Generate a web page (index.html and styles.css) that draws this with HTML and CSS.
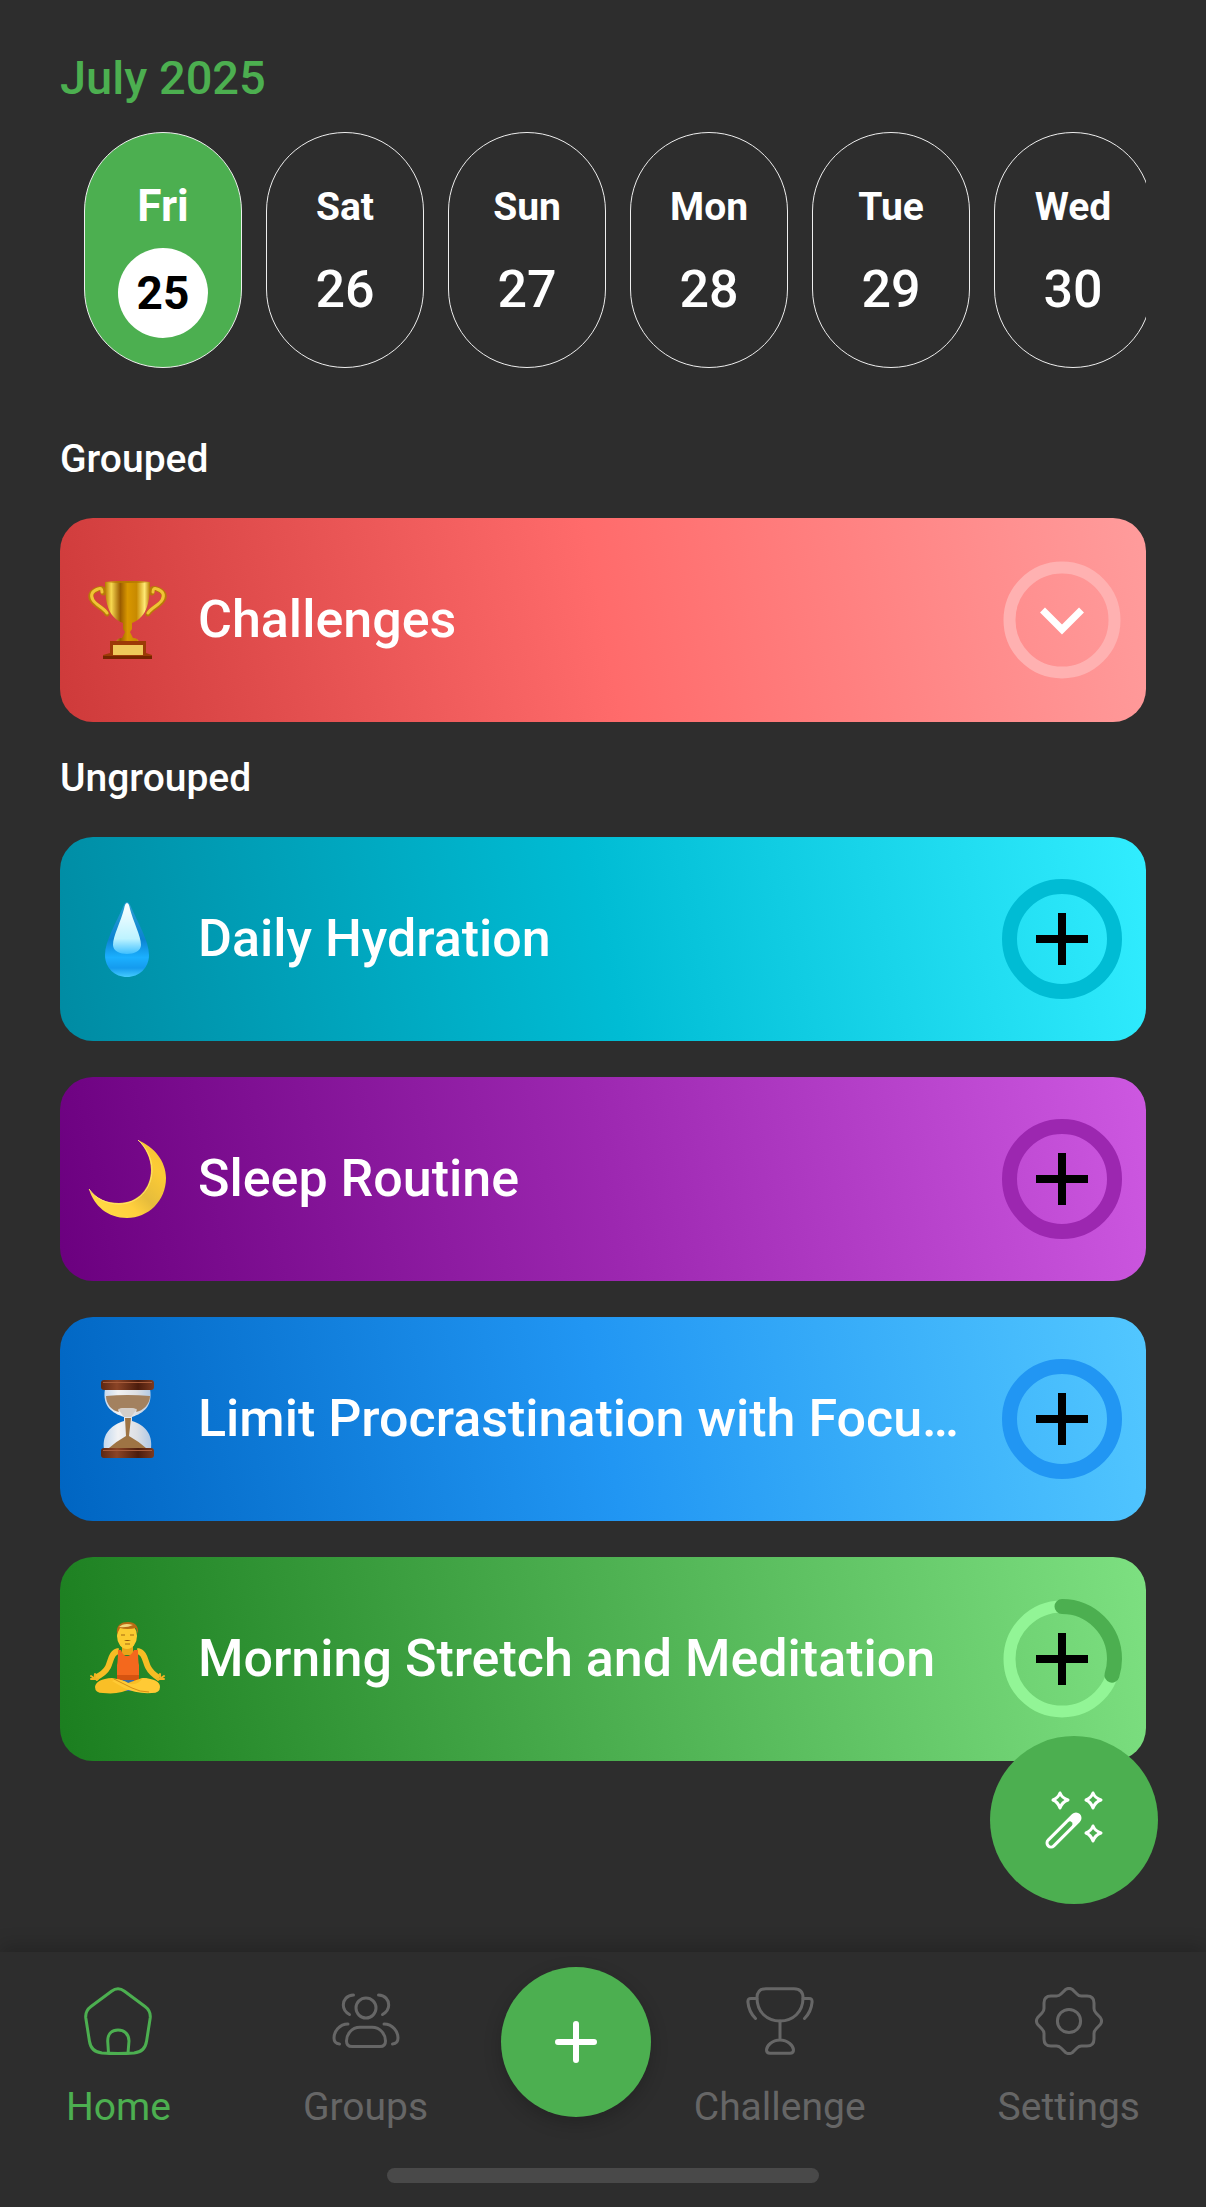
FILE: index.html
```
<!DOCTYPE html>
<html lang="en">
<head>
    <meta charset="UTF-8">
    <meta name="viewport" content="width=device-width, initial-scale=1.0">
    <title>Habits</title>
    <link rel="stylesheet" href="styles.css">
</head>
<body>
    <main class="content">
        <h1 class="month">July 2025</h1>
        <div class="days">
            <button class="day active"><span class="name">Fri</span><span class="date">25</span></button>
            <button class="day"><span class="name">Sat</span><span class="date">26</span></button>
            <button class="day"><span class="name">Sun</span><span class="date">27</span></button>
            <button class="day"><span class="name">Mon</span><span class="date">28</span></button>
            <button class="day"><span class="name">Tue</span><span class="date">29</span></button>
            <button class="day"><span class="name">Wed</span><span class="date">30</span></button>
        </div>

        <section class="group">
            <h2>Grouped</h2>
            <div class="card red">
                <svg class="emoji" viewBox="0 0 80 80" aria-hidden="true">
                    <defs>
                        <linearGradient id="gold" x1="0" x2="1" y1="0" y2="0">
                            <stop offset="0" stop-color="#b87a00"/>
                            <stop offset=".14" stop-color="#f7d850"/>
                            <stop offset=".34" stop-color="#9a5c00"/>
                            <stop offset=".5" stop-color="#d89700"/>
                            <stop offset=".7" stop-color="#c88a00"/>
                            <stop offset=".88" stop-color="#ffe975"/>
                            <stop offset="1" stop-color="#b87800"/>
                        </linearGradient>
                    </defs>
                    <g fill="none" stroke-linecap="round">
                        <path d="M15 13C17 8 13 8 10 9C4 11 1 15 4 20C7 26 16 28 19 34M64 13C62 8 66 8 69 9C75 11 78 15 75 20C72 26 63 28 60 34" stroke="#b87a08" stroke-width="5"/>
                        <path d="M14 12C14 8 12 8 10 9C4 11 2 15 5 20C8 25 16 28 19 33M65 12C65 8 67 8 69 9C75 11 77 15 74 20C71 25 63 28 60 33" stroke="#f0c435" stroke-width="3"/>
                    </g>
                    <path d="M17 2Q39 0 62 2C62 20 60 37 44 43V49L42 52L45 58Q50 58 51 62H28Q29 58 34 58L37 52L35 49V43C19 37 17 20 17 2Z" fill="url(#gold)"/>
                    <path d="M17 2Q39 4 62 2Q39 0 17 2Z" fill="#b87a00"/>
                    <path d="M22 61H58V73L64 75V79H15V75L22 73Z" fill="#9c3b06"/>
                    <path d="M15 76H64V79H15Z" fill="#752400"/>
                    <path d="M25 65H55V75H25Z" fill="#efc95a"/>
                </svg>
                <span class="title">Challenges</span>
                <button class="ring" aria-label="Expand challenges">
                    <svg viewBox="0 0 120 120">
                        <circle class="track" cx="60" cy="60" r="52.5"/>
                        <path class="chevron" d="M40.5 50L60 69.5L79.5 50"/>
                    </svg>
                </button>
            </div>
        </section>

        <section class="group">
            <h2>Ungrouped</h2>
            <div class="card cyan">
                <svg class="emoji" viewBox="0 0 80 80" aria-hidden="true">
                    <defs>
                        <linearGradient id="water" x1="0" x2="0" y1="0" y2="1">
                            <stop offset="0" stop-color="#2b9fd0"/>
                            <stop offset=".5" stop-color="#0b83d2"/>
                            <stop offset=".74" stop-color="#1bb0ff"/>
                            <stop offset=".88" stop-color="#159bee"/>
                            <stop offset="1" stop-color="#43cbff"/>
                        </linearGradient>
                        <linearGradient id="shine" x1="0" x2="0" y1="0" y2="1">
                            <stop offset="0" stop-color="#fff"/>
                            <stop offset=".7" stop-color="#bdf3ff"/>
                            <stop offset="1" stop-color="#3fc0ff"/>
                        </linearGradient>
                    </defs>
                    <path d="M39 3Q41 3 43 8C50 24 61 42 61 56C61 69 51 78 39 78S17 69 17 56C17 42 28 24 35 8Q37 3 39 3Z" fill="url(#water)"/>
                    <path d="M39 4Q41 4 42 10C45 22 53 37 53 46C53 58 25 58 25 46C25 37 33 22 36 10Q37 4 39 4Z" fill="url(#shine)"/>
                </svg>
                <span class="title">Daily Hydration</span>
                <button class="ring" aria-label="Add daily hydration">
                    <svg viewBox="0 0 120 120">
                        <circle class="full" cx="60" cy="60" r="52.5"/>
                        <path class="plus" d="M34 60H86M60 34V86"/>
                    </svg>
                </button>
            </div>
            <div class="card purple">
                <svg class="emoji" viewBox="0 0 80 80" aria-hidden="true">
                    <defs>
                        <linearGradient id="moon" x1="0" x2="1" y1="1" y2="0">
                            <stop offset="0" stop-color="#ffe04a"/>
                            <stop offset=".35" stop-color="#ffcf3d"/>
                            <stop offset=".5" stop-color="#e6bc3c"/>
                            <stop offset=".75" stop-color="#fccb35"/>
                            <stop offset="1" stop-color="#f3c037"/>
                        </linearGradient>
                    </defs>
                    <path d="M50 1C66 8 78 22 78 39C78 62 60 79 39 79C20 79 6 67 1 50C8 60 19 64 31 64C50 64 63 49 63 31C63 19 57 8 50 1Z" fill="url(#moon)"/>
                    <path d="M50 1C58 8 64 19 64 31C64 50 50 65 31 65C19 65 8 60 1 50" fill="none" stroke="#ffe36a" stroke-width="1"/>
                </svg>
                <span class="title">Sleep Routine</span>
                <button class="ring" aria-label="Add sleep routine">
                    <svg viewBox="0 0 120 120">
                        <circle class="full" cx="60" cy="60" r="52.5"/>
                        <path class="plus" d="M34 60H86M60 34V86"/>
                    </svg>
                </button>
            </div>
            <div class="card blue">
                <svg class="emoji" viewBox="0 0 80 80" aria-hidden="true">
                    <defs>
                        <linearGradient id="wood" x1="0" x2="1" y1="0" y2="0">
                            <stop offset="0" stop-color="#5d2712"/>
                            <stop offset=".3" stop-color="#8b4426"/>
                            <stop offset=".7" stop-color="#4c1c0c"/>
                            <stop offset="1" stop-color="#7c3a20"/>
                        </linearGradient>
                        <linearGradient id="glass" x1="0" x2="1" y1="0" y2="0">
                            <stop offset="0" stop-color="#c3d8ee"/>
                            <stop offset=".3" stop-color="#f1f2f4"/>
                            <stop offset=".7" stop-color="#dcdfe4"/>
                            <stop offset="1" stop-color="#b0c9e6"/>
                        </linearGradient>
                    </defs>
                    <path d="M17 10H62C65 27 56 34 44 38V42C57 46 65 55 63 70H16C14 55 23 46 36 42V38C24 34 14 27 17 10Z" fill="url(#glass)"/>
                    <path d="M18 17Q39 15 62 17C62 25 55 32 48 33Q51 29 39 29Q28 29 31 33C24 32 18 25 18 17Z" fill="#a3815f"/>
                    <path d="M37 39H43L41 57Q50 62 58 69H21Q29 62 38 57Z" fill="#9e7444"/>
                    <path d="M30 30Q39 28 49 30L43 38H36Z" fill="#d4cec9"/>
                    <rect x="13" y="1" width="53" height="10" rx="3" fill="url(#wood)"/>
                    <rect x="15" y="3" width="49" height="1" fill="#a75c3b"/>
                    <rect x="13" y="69" width="53" height="10" rx="3" fill="url(#wood)"/>
                    <rect x="15" y="71" width="49" height="1" fill="#a75c3b"/>
                </svg>
                <span class="title">Limit Procrastination with Focu…</span>
                <button class="ring" aria-label="Add limit procrastination">
                    <svg viewBox="0 0 120 120">
                        <circle class="full" cx="60" cy="60" r="52.5"/>
                        <path class="plus" d="M34 60H86M60 34V86"/>
                    </svg>
                </button>
            </div>
            <div class="card green">
                <svg class="emoji" viewBox="0 0 80 80" aria-hidden="true">
                    <path d="M31 32C23 33 23 42 20 48Q17 54 7 59M49 32C57 33 57 42 60 48Q63 54 71 59" fill="none" stroke="#f6bd24" stroke-width="6"/>
                    <path d="M9 61L3 57M7 58V55M10 60H3M70 61L76 57M72 58V55M69 60H76" stroke="#f2b321" stroke-width="2" stroke-linecap="round"/>
                    <path d="M34 26H45V36H34Z" fill="#e9a519"/>
                    <path d="M30 31H33Q35 37 39 37T46 31H50Q50 42 51 46V63H29V46Q30 42 30 31Z" fill="#f4681d"/>
                    <path d="M29 56H51V64H29Z" fill="#d65310"/>
                    <path d="M34 61H46V72H34Z" fill="#3d6fa3"/>
                    <path d="M24 59Q8 60 7 68Q7 74 15 74Q32 76 44 69L58 61Q62 59 54 59L40 64Q35 61 24 59Z" fill="#f9bf26"/>
                    <path d="M55 59Q72 60 72 68Q72 74 64 74Q48 75 36 69L24 62Q30 58 40 64Q48 68 55 59Z" fill="#ffca35"/>
                    <path d="M26 60L44 69Q52 73 61 73" fill="none" stroke="#d58f14" stroke-width="1"/>
                    <ellipse cx="39" cy="17" rx="10" ry="13" fill="#fccb30"/>
                    <path d="M29 15C28 6 33 3 40 3S51 7 50 15L48 9Q39 11 32 9Z" fill="#b96b13"/>
                    <path d="M31 8Q36 3 45 6Q39 9 31 8Z" fill="#f2d67a"/>
                    <path d="M33 16H37M42 16H46M37 25H42" fill="none" stroke="#a46b10" stroke-width="1"/>
                    <path d="M36 22Q39 20 43 22Z" fill="#8c4c0c"/>
                </svg>
                <span class="title">Morning Stretch and Meditation</span>
                <button class="ring" aria-label="Add morning stretch and meditation">
                    <svg viewBox="0 0 120 120">
                        <circle class="track" cx="60" cy="60" r="52.5"/>
                        <!-- 30% done -->
                        <circle class="progress" cx="60" cy="60" r="52.5" pathLength="100" transform="rotate(-90 60 60)"/>
                        <path class="plus" d="M34 60H86M60 34V86"/>
                    </svg>
                </button>
            </div>
        </section>

        <button class="magic" aria-label="Suggestions">
            <svg viewBox="0 0 60 60">
                <path d="M7 53L32 28" stroke="#fff" stroke-width="11" stroke-linecap="round"/>
                <path d="M7 53L26 34" stroke="#4CAF50" stroke-width="5" stroke-linecap="round"/>
                <g fill="none" stroke="#fff" stroke-width="3" stroke-linejoin="round">
                    <path d="M16 3Q18 8 24 10Q18 12 16 18Q14 12 9 10Q14 8 16 3Z"/>
                    <path d="M49 3Q51 8 57 10Q51 12 49 18Q47 12 42 10Q47 8 49 3Z"/>
                    <path d="M49 36Q51 41 57 43Q51 45 49 51Q47 45 42 43Q47 41 49 36Z"/>
                </g>
            </svg>
        </button>
    </main>

    <nav class="tabbar">
        <div class="tabs">
            <div class="side">
                <a href="#home" class="tab current">
                    <svg viewBox="0 0 68 68">
                        <path d="M27.5 4.2Q34 -.8 40.5 4.2L61 19.5Q67 24 66.2 31L62.6 54Q61 65 50 66Q34 67 18 66Q7 65 5.4 54L1.8 31Q1 24 7 19.5Z"/>
                        <path d="M24.5 66L23.7 54C23.7 47 28 43 34 43S45 47 45 54L44 66"/>
                    </svg>
                    Home
                </a>
                <a href="#groups" class="tab">
                    <svg viewBox="0 0 68 68">
                        <circle cx="34" cy="21" r="10"/>
                        <path d="M28 40.3H40C49 40.3 53.5 48 53.5 54Q53.5 59.6 48 59.6H20Q14.5 59.6 14.5 54C14.5 48 19 40.3 28 40.3Z"/>
                        <path d="M21.5 8C15 8 11.3 13 11.3 18Q11.3 24 17.5 27.5M46.5 8C53 8 56.7 13 56.7 18Q56.7 24 50.5 27.5"/>
                        <path d="M16 37C7 37 2 45 2 51Q2 56.5 7.5 57M52 37C61 37 66 45 66 51Q66 56.5 60.5 57"/>
                    </svg>
                    Groups
                </a>
            </div>
            <button class="add" aria-label="Add habit">
                <svg viewBox="0 0 42 42"><path d="M3 21H39M21 3V39"/></svg>
            </button>
            <div class="side">
                <a href="#challenge" class="tab">
                    <svg viewBox="0 0 68 68">
                        <path d="M20 1.7H48Q57 1.7 57 11C57 25 47 34 34 34S11 25 11 11Q11 1.7 20 1.7Z"/>
                        <path d="M11 11.4H5Q1.7 11.4 1.9 15C2.5 22 6 28 9.5 31.5M57 11.4H63Q66.3 11.4 66.1 15C65.5 22 62 28 58.5 31.5"/>
                        <path d="M34 34V53C42 53 47.5 59 47.5 63Q47.5 66.3 44 66.3H24Q20.5 66.3 20.5 63C20.5 59 26 53 34 53"/>
                    </svg>
                    Challenge
                </a>
                <a href="#settings" class="tab">
                    <svg viewBox="0 0 68 68">
                        <circle cx="34" cy="34" r="11.6"/>
                        <path d="M30.5 2.6Q34 .2 37.5 2.6L42 7Q43.8 9 46.5 9H52Q59 9 59 16V21.5Q59 24 61 26L65.3 30.5Q67.8 34 65.3 37.5L61 42Q59 44 59 46.5V52Q59 59 52 59H46.5Q44 59 42 61L37.5 65.4Q34 67.8 30.5 65.4L26 61Q24 59 21.5 59H16Q9 59 9 52V46.5Q9 44 7 42L2.7 37.5Q.2 34 2.7 30.5L7 26Q9 24 9 21.5V16Q9 9 16 9H21.5Q24 9 26 7Z"/>
                    </svg>
                    Settings
                </a>
            </div>
        </div>
        <div class="home-indicator"></div>
    </nav>
</body>
</html>
```
FILE: styles.css
```
* {
    box-sizing: border-box;
}
body {
    display: flex;
    flex-direction: column;
    min-height: 100vh;
    margin: 0;
    background-color: #2D2D2D;
    color: white;
    font-family: Roboto, sans-serif;
}
button {
    padding: 0;
    border: none;
    background: none;
    color: inherit;
    font-family: inherit;
    cursor: pointer;
}
svg {
    display: block;
}
.content {
    position: relative;
    flex: 1;
    padding: 50px 60px 0;
}
.month {
    margin: 0 0 26px;
    color: #4CAF50;
    font-size: 47px;
    font-weight: 500;
    line-height: 56px;
}

/* day picker */
.days {
    display: flex;
    gap: 24px;
    margin-bottom: 68px;
    padding-left: 24px;
    overflow: hidden;
}
.day {
    display: flex;
    flex-direction: column;
    flex-shrink: 0;
    align-items: center;
    gap: 17px;
    width: 158px;
    height: 236px;
    padding-top: 50px;
    border: 1px solid #eee;
    border-radius: 79px;
}
.day .name {
    font-size: 39px;
    font-weight: 700;
    line-height: 48px;
}
.day .date {
    font-size: 52px;
    font-weight: 500;
    line-height: 84px;
}
.day.active {
    background-color: #4CAF50;
}
.day.active .name {
    font-size: 44px;
    line-height: 46px;
    padding-bottom: 2px;
}
.day.active .date {
    width: 90px;
    border-radius: 50%;
    background-color: white;
    color: black;
    font-size: 46px;
    font-weight: 700;
    line-height: 90px;
}

/* habit cards */
.group {
    display: flex;
    flex-direction: column;
    gap: 36px;
    margin-bottom: 33px;
}
.group h2 {
    margin: 0;
    font-size: 39px;
    font-weight: 500;
    line-height: 46px;
}
.card {
    display: flex;
    align-items: center;
    gap: 30px;
    height: 204px;
    padding: 0 24px 0 28px;
    border-radius: 33px;
}
.emoji {
    flex-shrink: 0;
    width: 80px;
    height: 80px;
}
.title {
    flex: 1;
    min-width: 0;
    overflow: hidden;
    font-size: 52px;
    font-weight: 500;
    line-height: 64px;
    text-overflow: ellipsis;
    white-space: nowrap;
}
.ring {
    flex-shrink: 0;
    width: 120px;
    height: 120px;
}
.ring circle,
.ring path {
    fill: none;
}
.ring .track {
    stroke-width: 12;
}
.ring .full {
    stroke-width: 15;
}
.ring .progress {
    stroke: #4CAF50;
    stroke-width: 15;
    stroke-linecap: round;
    stroke-dasharray: 30 100;
}
.ring .plus {
    stroke: black;
    stroke-width: 8;
}
.ring .chevron {
    stroke: white;
    stroke-width: 7;
}
.red {
    background: linear-gradient(79deg, #CE3A3A, #FF6B6B, #FF9C9C);
}
.red .track {
    stroke: #FFB1B1;
}
.cyan {
    background: linear-gradient(79deg, #008BA3, #00BCD4, #31EDFF);
}
.cyan .full {
    stroke: #00BCD4;
}
.purple {
    background: linear-gradient(79deg, #6B007F, #9C27B0, #CD58E1);
}
.purple .full {
    stroke: #9C27B0;
}
.blue {
    background: linear-gradient(79deg, #0065C2, #2196F3, #52C7FF);
}
.blue .full {
    stroke: #2196F3;
}
.green {
    background: linear-gradient(79deg, #1B7E1F, #4CAF50, #7DE081);
}
.green .track {
    stroke: #92F596;
}

.magic {
    position: absolute;
    right: 48px;
    bottom: 48px;
    width: 168px;
    height: 168px;
    border-radius: 50%;
    background-color: #4CAF50;
}
.magic svg {
    width: 60px;
    height: 60px;
    margin: 0 auto;
}

/* bottom navigation */
.tabbar {
    padding: 15px 66px 24px;
    background-color: #2D2D2D;
    box-shadow: 0 -6px 18px rgba(0, 0, 0, 0.2);
}
.tabs {
    display: flex;
    align-items: flex-start;
    justify-content: space-between;
}
.side {
    display: flex;
    gap: 132px;
    padding-top: 20px;
}
.tab {
    display: flex;
    flex-direction: column;
    align-items: center;
    gap: 29px;
    color: #666;
    font-size: 39px;
    line-height: 46px;
    text-decoration: none;
}
.tab.current {
    color: #4CAF50;
}
.tab svg {
    width: 68px;
    height: 68px;
    fill: none;
    stroke: currentColor;
    stroke-width: 3;
    stroke-linecap: round;
    stroke-linejoin: round;
}
.add {
    width: 150px;
    height: 150px;
    margin-left: 30px;
    border-radius: 50%;
    background-color: #4CAF50;
    box-shadow: 0 6px 18px rgba(0, 0, 0, 0.2);
}
.add svg {
    width: 42px;
    height: 42px;
    margin: 0 auto;
    fill: none;
    stroke: white;
    stroke-width: 6;
    stroke-linecap: round;
}
.home-indicator {
    width: 432px;
    max-width: 100%;
    height: 15px;
    margin: 38px auto 0;
    border-radius: 8px;
    background-color: #494949;
}
```
